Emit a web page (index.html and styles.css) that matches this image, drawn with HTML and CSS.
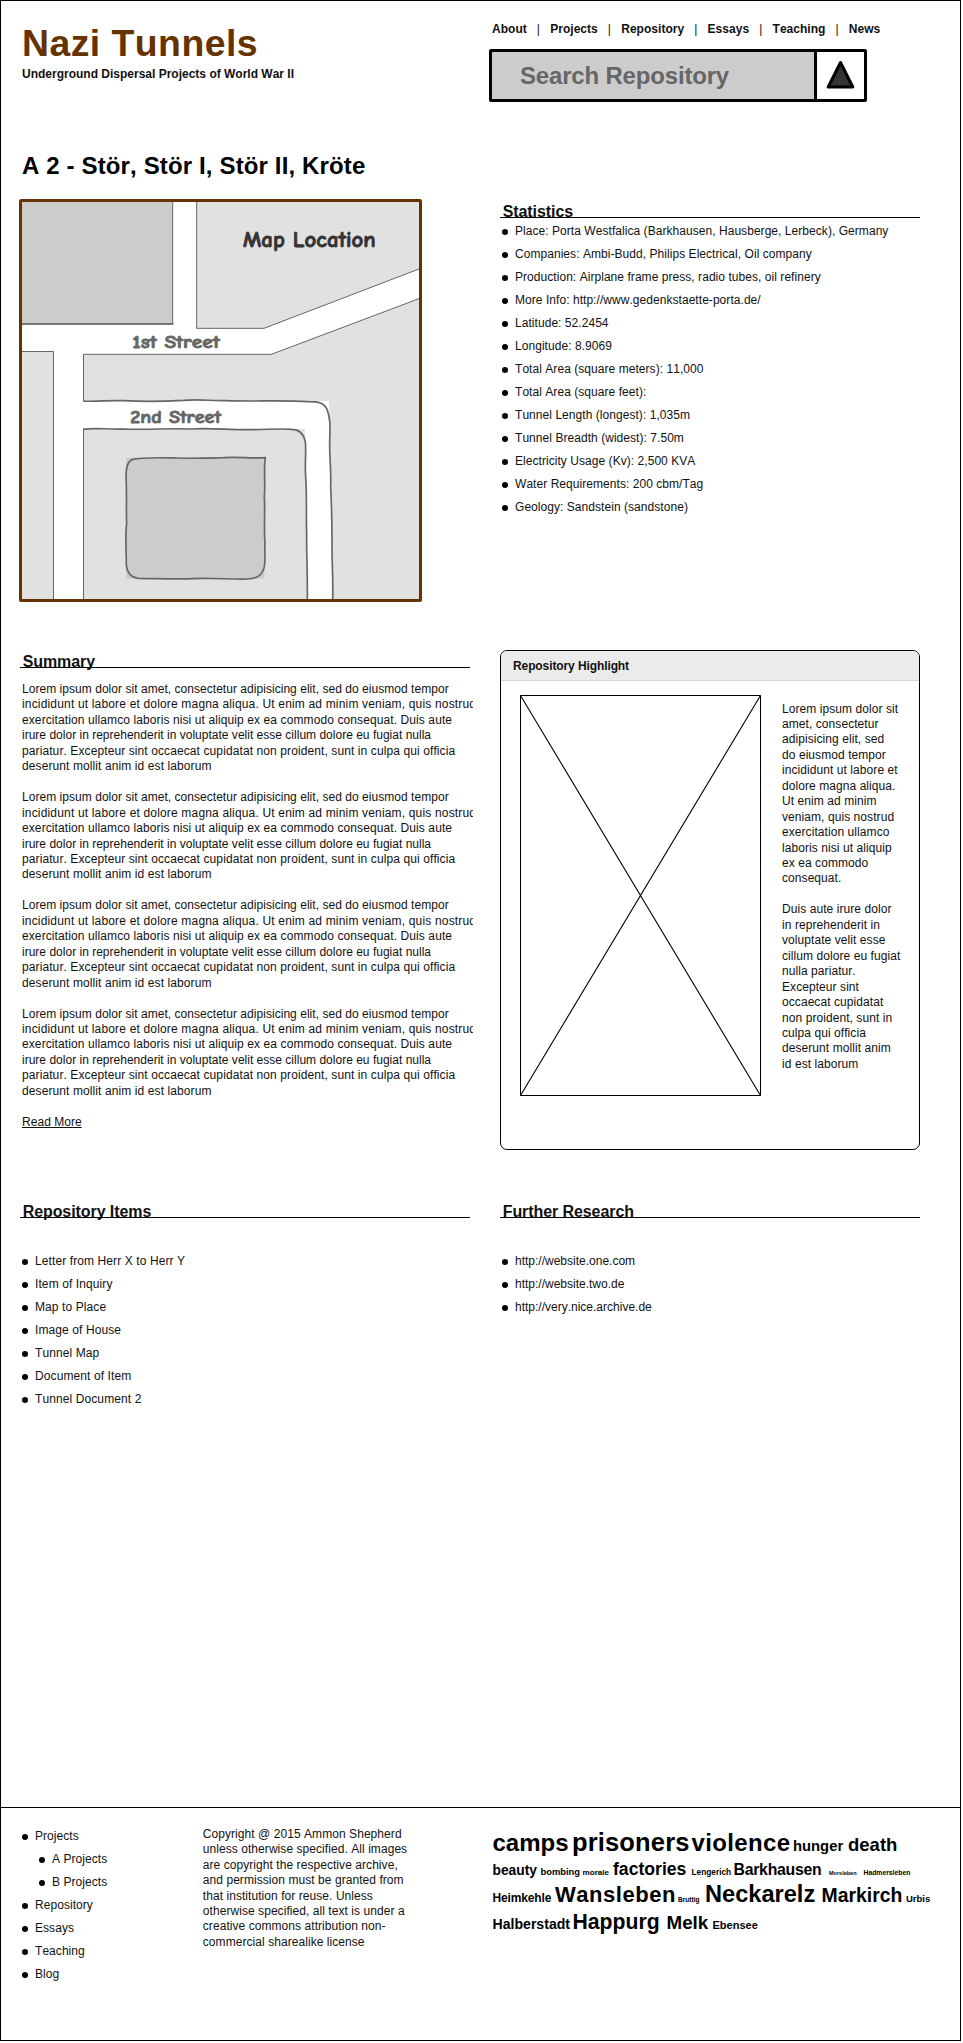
FILE: index.html
```html
<!DOCTYPE html>
<html lang="en">
<head>
<meta charset="utf-8">
<title>Nazi Tunnels</title>
<link rel="stylesheet" href="styles.css">
</head>
<body>
<div class="page">
  <header class="header">
    <div class="brand">
      <div class="site-title">Nazi Tunnels</div>
      <div class="tagline">Underground Dispersal Projects of World War II</div>
      <h1>A 2 - Stör, Stör I, Stör II, Kröte</h1>
    </div>
    <div class="tools">
      <nav class="nav"><a>About</a><i>|</i><a>Projects</a><i>|</i><a>Repository</a><i>|</i><a>Essays</a><i>|</i><a>Teaching</a><i>|</i><a>News</a></nav>
      <div class="search">
        <div class="search-field">Search Repository</div>
        <div class="search-button">
          <svg width="30" height="32" viewBox="0 0 30 32"><path d="M15.500 4.500 L27.800 29 H3.200 Z" fill="#333" stroke="#000" stroke-width="3" stroke-linejoin="round"/></svg>
        </div>
      </div>
    </div>
  </header>

  <section class="row overview">
    <div class="map">
      <svg width="403" height="403" viewBox="57 27 1209 1209">
        <rect x="57" y="27" width="1209" height="1209" fill="#fff"/>
        <g fill="#e1e1e1" stroke="#666" stroke-width="3">
          <rect x="50" y="20" width="468" height="382" fill="#ccc"/>
          <path d="M60 402H520" stroke-width="5"/>
          <path d="M590 20V415H792L1270 232V20Z"/>
          <path d="M50 484.500H160.500V1250H50Z"/>
          <path d="M250.500 493V633H987L1000 1250H1270V321L814 493Z" stroke="none"/>
          <path d="M250.500 633V493H814L1270 321" fill="none"/>
          <path d="M250.500 717H915L921 1250H250.500Z" stroke="none"/>
          <path d="M250.500 716V1250" fill="none"/>
        </g>
        <g fill="none" stroke="#666" stroke-width="5" stroke-linejoin="round">
          <path d="M249 633C290 636 325 630 370 632C440 636 500 634 550 631C590 627 630 632 680 632C760 635 850 630 925 635C955 635 972 638 981 658C994 690 989 720 989 765C989 810 994 850 992 890C995 950 996 1010 996 1060C995 1110 1000 1150 998 1240"/>
          <path d="M249 718C290 712 320 719 370 717C450 720 500 714 570 717C630 713 690 720 750 719C800 719 840 715 875 718C900 718 911 733 916 755C919 785 914 820 917 860C921 910 918 980 920 1030C919 1090 923 1130 922 1240"/>
          <path d="M378 803H796L793 1166H378Z" fill="#ccc" stroke="none"/>
          <path d="M796 803C790 840 797 880 793 920C796 970 791 1010 795 1060C793 1090 797 1110 793 1130C787 1154 775 1165 745 1167C690 1169 640 1163 580 1166C520 1168 460 1165 415 1165C392 1162 381 1148 379 1125C379 1080 375 1040 380 1000C378 950 381 910 378 860C379 830 382 815 398 808C430 801 480 803 530 804C590 806 630 804 670 803C710 800 760 806 796 803Z"/>
        </g>
        <g class="map-labels">
          <text x="729" y="171" font-size="68" fill="#333" stroke="#333" textLength="398" lengthAdjust="spacingAndGlyphs">Map Location</text>
          <text x="397" y="473" font-size="54" fill="#666" stroke="#666" textLength="262" lengthAdjust="spacingAndGlyphs">1st Street</text>
          <text x="391" y="698" font-size="54" fill="#666" stroke="#666" textLength="272" lengthAdjust="spacingAndGlyphs">2nd Street</text>
        </g>
        <rect x="61.500" y="31.500" width="1200" height="1200" rx="3" fill="none" stroke="#630" stroke-width="9"/>
      </svg>
    </div>
    <div class="side">
      <h2>Statistics</h2>
      <ul class="list stats">
        <li>Place: Porta Westfalica (Barkhausen, Hausberge, Lerbeck), Germany</li>
        <li>Companies: Ambi-Budd, Philips Electrical, Oil company</li>
        <li>Production: Airplane frame press, radio tubes, oil refinery</li>
        <li>More Info: http://www.gedenkstaette-porta.de/</li>
        <li>Latitude: 52.2454</li>
        <li>Longitude: 8.9069</li>
        <li>Total Area (square meters): 11,000</li>
        <li>Total Area (square feet):</li>
        <li>Tunnel Length (longest): 1,035m</li>
        <li>Tunnel Breadth (widest): 7.50m</li>
        <li>Electricity Usage (Kv): 2,500 KVA</li>
        <li>Water Requirements: 200 cbm/Tag</li>
        <li>Geology: Sandstein (sandstone)</li>
      </ul>
    </div>
  </section>

  <section class="row details">
    <div class="summary">
      <h2>Summary</h2>
      <div class="copy">
        <p>Lorem ipsum dolor sit amet, consectetur adipisicing elit, sed do eiusmod tempor<br><span class="wider">incididunt ut labore et dolore magna aliqua. Ut enim ad minim veniam, quis nostrud</span><br><span class="wide">exercitation ullamco laboris nisi ut aliquip ex ea commodo consequat. Duis aute</span><br><span class="tight">irure dolor in reprehenderit in voluptate velit esse cillum dolore eu fugiat nulla</span><br><span class="wide">pariatur. Excepteur sint occaecat cupidatat non proident, sunt in culpa qui officia</span><br><span class="wide">deserunt mollit anim id est laborum</span></p>
        <p>Lorem ipsum dolor sit amet, consectetur adipisicing elit, sed do eiusmod tempor<br><span class="wider">incididunt ut labore et dolore magna aliqua. Ut enim ad minim veniam, quis nostrud</span><br><span class="wide">exercitation ullamco laboris nisi ut aliquip ex ea commodo consequat. Duis aute</span><br><span class="tight">irure dolor in reprehenderit in voluptate velit esse cillum dolore eu fugiat nulla</span><br><span class="wide">pariatur. Excepteur sint occaecat cupidatat non proident, sunt in culpa qui officia</span><br><span class="wide">deserunt mollit anim id est laborum</span></p>
        <p>Lorem ipsum dolor sit amet, consectetur adipisicing elit, sed do eiusmod tempor<br><span class="wider">incididunt ut labore et dolore magna aliqua. Ut enim ad minim veniam, quis nostrud</span><br><span class="wide">exercitation ullamco laboris nisi ut aliquip ex ea commodo consequat. Duis aute</span><br><span class="tight">irure dolor in reprehenderit in voluptate velit esse cillum dolore eu fugiat nulla</span><br><span class="wide">pariatur. Excepteur sint occaecat cupidatat non proident, sunt in culpa qui officia</span><br><span class="wide">deserunt mollit anim id est laborum</span></p>
        <p>Lorem ipsum dolor sit amet, consectetur adipisicing elit, sed do eiusmod tempor<br><span class="wider">incididunt ut labore et dolore magna aliqua. Ut enim ad minim veniam, quis nostrud</span><br><span class="wide">exercitation ullamco laboris nisi ut aliquip ex ea commodo consequat. Duis aute</span><br><span class="tight">irure dolor in reprehenderit in voluptate velit esse cillum dolore eu fugiat nulla</span><br><span class="wide">pariatur. Excepteur sint occaecat cupidatat non proident, sunt in culpa qui officia</span><br><span class="wide">deserunt mollit anim id est laborum</span></p>
        <p><a class="more">Read More</a></p>
      </div>
    </div>
    <div class="highlight">
      <div class="highlight-head">Repository Highlight</div>
      <div class="highlight-body">
        <svg class="placeholder" width="241" height="401" viewBox="0 0 241 401"><path d="M.5 .5H240.500V400.500H.5Z" fill="#fff" stroke="#000"/><path d="M.5 .5L240.500 400.500M240.500 .5L.5 400.500" stroke="#000" fill="none" stroke-width="1.1"/></svg>
        <div class="copy narrow">
          <p>Lorem ipsum dolor sit<br>amet, consectetur<br>adipisicing elit, sed<br>do eiusmod tempor<br>incididunt ut labore et<br>dolore magna aliqua.<br>Ut enim ad minim<br>veniam, quis nostrud<br>exercitation ullamco<br>laboris nisi ut aliquip<br>ex ea commodo<br>consequat.</p>
          <p>Duis aute irure dolor<br>in reprehenderit in<br>voluptate velit esse<br>cillum dolore eu fugiat<br>nulla pariatur.<br>Excepteur sint<br>occaecat cupidatat<br>non proident, sunt in<br>culpa qui officia<br>deserunt mollit anim<br>id est laborum</p>
        </div>
      </div>
    </div>
  </section>

  <section class="row links">
    <div class="items">
      <h2>Repository Items</h2>
      <ul class="list">
        <li>Letter from Herr X to Herr Y</li>
        <li>Item of Inquiry</li>
        <li>Map to Place</li>
        <li>Image of House</li>
        <li>Tunnel Map</li>
        <li>Document of Item</li>
        <li>Tunnel Document 2</li>
      </ul>
    </div>
    <div class="side">
      <h2>Further Research</h2>
      <ul class="list urls">
        <li>http://website.one.com</li>
        <li>http://website.two.de</li>
        <li>http://very.nice.archive.de</li>
      </ul>
    </div>
  </section>

  <footer class="footer">
    <ul class="list">
      <li>Projects</li>
      <li class="sub">A Projects</li>
      <li class="sub">B Projects</li>
      <li>Repository</li>
      <li>Essays</li>
      <li>Teaching</li>
      <li>Blog</li>
    </ul>
    <div class="copy legal">
      <p>Copyright @ 2015 Ammon Shepherd<br>unless otherwise specified. All images<br>are copyright the respective archive,<br>and permission must be granted from<br>that institution for reuse. Unless<br>otherwise specified, all text is under a<br>creative commons attribution non-<br>commercial sharealike license</p>
    </div>
    <div class="cloud">
      <div class="line l1"><span class="camps">camps</span><span class="prisoners">prisoners</span><span class="violence">violence</span><span class="hunger">hunger</span><span class="death">death</span></div>
      <div class="line l2"><span class="beauty">beauty</span><span class="bombing">bombing</span><span class="morale">morale</span><span class="factories">factories</span><span class="lengerich">Lengerich</span><span class="barkhausen">Barkhausen</span><span class="morsleben">Morsleben</span><span class="hadmersleben">Hadmersleben</span></div>
      <div class="line l3"><span class="heimkehle">Heimkehle</span><span class="wansleben">Wansleben</span><span class="bruttig">Bruttig</span><span class="neckarelz">Neckarelz</span><span class="markirch">Markirch</span><span class="urbis">Urbis</span></div>
      <div class="line l4"><span class="halberstadt">Halberstadt</span><span class="happurg">Happurg</span><span class="melk">Melk</span><span class="ebensee">Ebensee</span></div>
    </div>
  </footer>
</div>
</body>
</html>
```
FILE: styles.css
```css
* { box-sizing: border-box; }
body {
  margin: 0;
  background: #fff;
  color: #111;
  font: 12px/16px "Liberation Sans", Arial, sans-serif;
  font-kerning: none;
}
h1, h2, p, ul { margin: 0; padding: 0; }
svg { display: block; }

.page {
  width: 961px;
  height: 2041px;
  border: 1px solid #000;
}

/* header */
.header {
  display: grid;
  grid-template-columns: 467px 1fr;
  height: 198px;
  padding-left: 21px;
}
.site-title {
  margin-top: 21px;
  font-size: 37.4px;
  line-height: 42px;
  font-weight: bold;
  letter-spacing: .45px;
  color: #630;
}
.tagline { margin-top: 2px; font-weight: bold; }
h1 {
  margin-top: 70px;
  font-size: 24px;
  line-height: 27px;
  color: #000;
  letter-spacing: .14px;
}
.nav {
  display: flex;
  gap: 10px;
  padding: 20px 0 12px 3px;
  font-weight: bold;
  letter-spacing: .03px;
}
.nav i { font-style: normal; font-weight: normal; width: 3.400px; }
.search {
  display: flex;
  width: 378px;
  height: 53px;
  border: 3px solid #000;
  border-radius: 2px;
}
.search-field {
  width: 325px;
  padding-left: 28px;
  background: #ccc;
  border-right: 3px solid #000;
  color: #666;
  font-size: 24px;
  font-weight: bold;
  line-height: 47px;
  letter-spacing: -0.18px;
}
.search-button { flex: 1; padding: 6px 0 0 8px; }

/* content rows */
.row { display: grid; grid-template-columns: 480px 420px; padding-left: 19px; }
.overview { height: 450px; }
.details { height: 550px; }
.links { height: 608px; }
.map { margin-left: -1px; }
.map-labels {
  font-family: "Comic Sans MS", "Comic Neue", "Noto Sans", sans-serif;
  font-weight: bold;
  stroke-width: 2.500px;
}

h2 {
  height: 19px;
  padding: 2px 0 0 2.700px;
  border-bottom: 1px solid #000;
  font-size: 16px;
  line-height: 21px;
  letter-spacing: -0.08px;
}
.summary h2, .items h2 { width: 450px; }

.list { list-style: none; padding-left: 2px; letter-spacing: .05px; }
.stats { margin-top: 1px; }
.links .list { margin-top: 31px; }
.items .list { letter-spacing: .1px; }
.links .urls { letter-spacing: 0; }
.list li { display: flex; height: 23px; line-height: 24px; white-space: nowrap; }
.list li::before {
  content: "";
  flex: none;
  width: 6px;
  height: 6px;
  margin: 10px 7px 0 0;
  border-radius: 50%;
  background: #000;
}
.list .sub { padding-left: 17px; }

.copy { line-height: 15.46px; white-space: nowrap; letter-spacing: .04px; }
.copy p + p { margin-top: 15.46px; }
.summary .copy {
  width: 453px;
  margin-top: 14px;
  padding-left: 2px;
  overflow: hidden;
}
.wider { letter-spacing: .17px; }
.wide { letter-spacing: .1px; }
.tight { letter-spacing: .01px; }
.more { text-decoration: underline; text-underline-offset: 1px; text-decoration-skip-ink: none; }

/* highlight panel */
.highlight {
  height: 500px;
  margin-top: 1px;
  border: 1px solid #000;
  border-radius: 7px;
  overflow: hidden;
}
.highlight-head {
  height: 30px;
  padding-left: 12px;
  background: #ebebeb;
  border-bottom: 1px solid #d5d5d5;
  font-weight: bold;
  line-height: 30px;
  letter-spacing: -0.1px;
}
.highlight-body { display: flex; padding: 14px 0 0 19px; }
.narrow { margin: 6.500px 0 0 21px; letter-spacing: .07px; }

/* footer */
.footer {
  display: grid;
  grid-template-columns: 182px 290px 1fr;
  border-top: 1px solid #000;
  padding: 16px 0 0 19px;
}
.legal { margin-top: 2.700px; letter-spacing: .06px; }
.legal p { padding-left: .8px; }

/* tag cloud */
.cloud { padding: 11px 0 0 .5px; font-weight: bold; color: #000; white-space: nowrap; }
.line { display: block; font-size: 12px; }
.line span { display: inline-block; line-height: 0; }
.l1, .l2 { height: 24px; line-height: 24px; }
.l3 { height: 30px; line-height: 30px; }
.l4 { height: 25px; line-height: 25px; }
.camps { width: 79.500px; font-size: 24px; }
.prisoners { width: 119.500px; font-size: 25.500px; letter-spacing: .15px; }
.violence { width: 101.500px; font-size: 24px; letter-spacing: .35px; }
.hunger { width: 55px; font-size: 14.800px; }
.death { width: 50px; font-size: 18.500px; }
.beauty { width: 48px; font-size: 13.800px; }
.bombing { width: 42px; font-size: 9.400px; }
.morale { width: 30.500px; font-size: 8.100px; }
.factories { width: 78.500px; font-size: 17.600px; }
.lengerich { width: 42px; font-size: 8.300px; }
.barkhausen { width: 95.500px; font-size: 15.800px; letter-spacing: -0.25px; }
.morsleben { width: 34.500px; font-size: 5.500px; }
.hadmersleben { width: 48px; font-size: 6.800px; }
.heimkehle { width: 62.500px; font-size: 12px; letter-spacing: -0.15px; }
.wansleben { width: 123px; font-size: 22px; letter-spacing: .55px; }
.bruttig { width: 27px; font-size: 6.600px; }
.neckarelz { width: 116.500px; font-size: 23.600px; }
.markirch { width: 84.500px; font-size: 19.400px; }
.urbis { width: 25px; font-size: 9.500px; }
.halberstadt { width: 80px; font-size: 14.100px; }
.happurg { width: 94px; font-size: 21.200px; }
.melk { width: 46px; font-size: 18.800px; }
.ebensee { width: 46px; font-size: 11px; }
```
